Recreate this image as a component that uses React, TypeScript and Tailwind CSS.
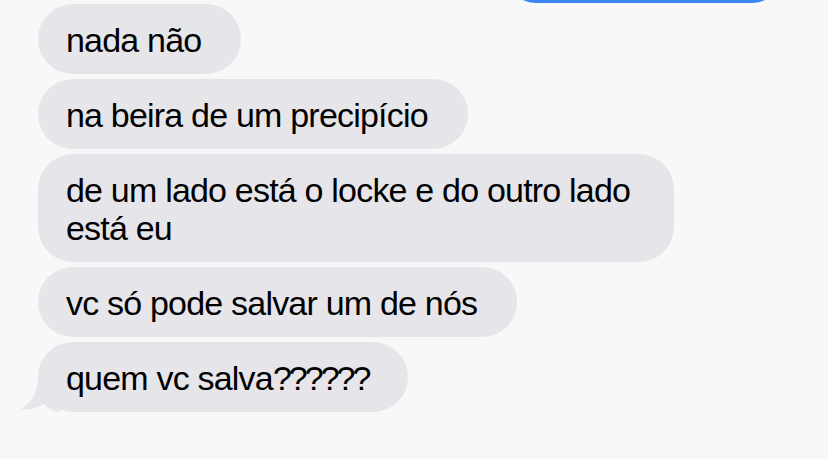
import type { ReactNode } from "react";

const messages: ReactNode[] = [
  "nada não",
  "na beira de um precipício",
  "de um lado está o locke e do outro lado está eu",
  "vc só pode salvar um de nós",
  <>
    quem vc salva<span className="tracking-[-3px]">??????</span>
  </>,
];

// Received-message tail, sits behind the last bubble's bottom-left corner
function Tail() {
  return (
    <svg
      aria-hidden
      className="absolute -left-[18px] bottom-0"
      width="40"
      height="40"
      viewBox="0 0 40 40"
    >
      <path
        d="M18 6 C18 20 12 30 1 37 C8 38.5 17 36.5 24 32 C28 36 32 39 40 40 L40 6 Z"
        fill="#e5e5ea"
      />
    </svg>
  );
}

function Bubble({ text, last }: { text: ReactNode; last: boolean }) {
  return (
    <div className="relative max-w-[636px] self-start">
      {last && <Tail />}
      <div className="relative rounded-[35px] bg-[#e5e5ea] pt-[17px] pb-[15px] pl-[28px] pr-[40px] text-[34px] leading-[38px] tracking-[-0.8px] text-black">
        {text}
      </div>
    </div>
  );
}

export default function App() {
  return (
    <div
      className="flex h-[459px] w-[828px] flex-col overflow-hidden bg-[#f8f8f9]"
      style={{ fontFamily: '"Liberation Sans", Arial, sans-serif' }}
    >
      {/* outgoing bubble from the previous turn, scrolled mostly off screen */}
      <div className="-mt-[59px] mr-[46px] h-[62px] w-[276px] self-end rounded-[30px] bg-[#3a86f3]" />
      <div className="mt-[1px] flex flex-col gap-[5px] pl-[38px]">
        {messages.map((m, i) => (
          <Bubble key={i} text={m} last={i === messages.length - 1} />
        ))}
      </div>
    </div>
  );
}
